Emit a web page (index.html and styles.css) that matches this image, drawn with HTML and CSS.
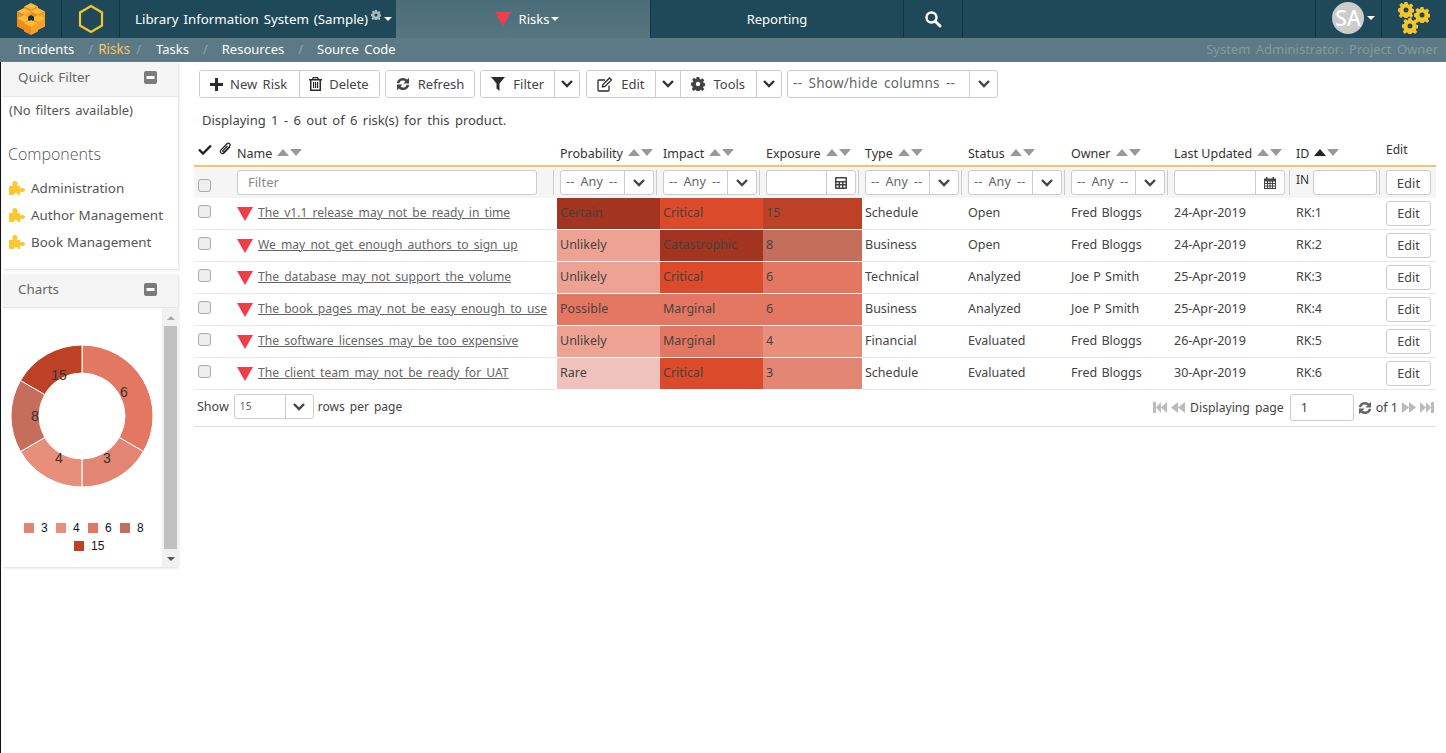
FILE: index.html
```html
<!DOCTYPE html>
<html lang="en">
<head>
<meta charset="utf-8">
<title>Risks</title>
<link rel="stylesheet" href="styles.css">
</head>
<body>
<svg class="sprite" width="0" height="0" aria-hidden="true">
  <defs>
    <symbol id="i-chev" viewBox="0 0 14 10"><path d="M2 2l5 5 5-5" fill="none" stroke="currentColor" stroke-width="2.4"/></symbol>
    <symbol id="i-tri" viewBox="0 0 16 14"><path d="M0 0h16L8 14z" fill="#ef3e4a"/></symbol>
    <symbol id="i-up" viewBox="0 0 12 7"><path d="M0 7L6 0l6 7z" fill="currentColor"/></symbol>
    <symbol id="i-down" viewBox="0 0 12 7"><path d="M0 0h12L6 7z" fill="currentColor"/></symbol>
    <symbol id="i-refresh" viewBox="0 0 14 14"><path d="M.8 6A6.300 6.300 0 0 1 11.200 2.600L13 .8V6.600H7.400L9.500 4.500A3.800 3.800 0 0 0 3.200 6.200zM13.200 8A6.300 6.300 0 0 1 2.800 11.400L1 13.200V7.400H6.600L4.500 9.500A3.800 3.800 0 0 0 10.800 7.800z" fill="currentColor"/></symbol>
    <symbol id="i-puzzle" viewBox="0 0 16 14"><path d="M0 14V5h4C3 3 3 0 6 0s3 3 2 5h3v2.500c1-.8 5-1 5 1.500s-4 2.300-5 1.500V14H8.500c.6-1 0-2-1.500-2s-2.500 1-2 2z" fill="#fdc82f"/></symbol>
    <symbol id="i-minus" viewBox="0 0 13 13"><rect width="13" height="13" rx="2" fill="#7b7b7b"/><rect x="2.500" y="5" width="8" height="3" fill="#fff"/></symbol>
    <symbol id="i-gear" viewBox="0 0 16 16"><path d="M6.500 0h3l.4 2.300 1.300.5 1.900-1.300 2.100 2.100-1.300 1.900.5 1.300 2.100.4v3l-2.100.4-.5 1.300 1.300 1.900-2.100 2.100-1.900-1.300-1.300.5-.4 2.300h-3l-.4-2.300-1.300-.5-1.900 1.300-2.100-2.100 1.300-1.900-.5-1.300L0 9.500v-3l2.100-.4.500-1.300L1.300 3 3.400 .9l1.900 1.300 .8-.5zM8 5.500a2.500 2.500 0 1 0 0 5 2.500 2.500 0 0 0 0-5z" fill="currentColor" fill-rule="evenodd"/></symbol>
    <symbol id="i-calc" viewBox="0 0 12 12"><path d="M1 0h10a1 1 0 0 1 1 1v10a1 1 0 0 1-1 1H1a1 1 0 0 1-1-1V1a1 1 0 0 1 1-1zm.5 1.500v2.500h9V1.500zm0 4v1.500h2V5.500zm3.500 0v1.500h2V5.500zm3.500 0v1.500h2V5.500zm-7 3v2h2v-2zm3.500 0v2h2v-2zm3.500 0v2h2v-2z" fill="currentColor" fill-rule="evenodd"/></symbol>
    <symbol id="i-cal" viewBox="0 0 12 12"><path d="M2 0h1.500v1.500h5V0H10v1.500h2V12H0V1.500h2zM1 4.500v1.500h2V4.500zm3 0v1.500h1.500V4.500zm2.500 0v1.500H8V4.500zm2.500 0v1.500h2V4.500zM1 7v1.500h2V7zm3 0v1.500h1.500V7zm2.500 0v1.500H8V7zM9 7v1.500h2V7zM1 9.500V11h2V9.500zm3 0V11h1.500V9.500zm2.500 0V11H8V9.500zm2.500 0V11h2V9.500z" fill="currentColor" fill-rule="evenodd"/></symbol>
    <symbol id="i-first" viewBox="0 0 14 11"><path d="M0 0h3v11H0zM3 5.500L8 0v11zM8 5.500L14 0v11z" fill="currentColor"/></symbol>
    <symbol id="i-prev" viewBox="0 0 14 11"><path d="M0 5.500L7 0v11zM7 5.500L14 0v11z" fill="currentColor"/></symbol>
    <symbol id="i-next" viewBox="0 0 14 11"><path d="M0 0l7 5.500L0 11zM7 0l7 5.500L7 11z" fill="currentColor"/></symbol>
    <symbol id="i-last" viewBox="0 0 14 11"><path d="M0 0l6 5.500L0 11zM6 0l5 5.500L6 11zM11 0h3v11h-3z" fill="currentColor"/></symbol>
    <symbol id="i-cube" viewBox="0 0 14 15"><path d="M7 0l7 3.500L7 7 0 3.500z" fill="#fdbb3d"/><path d="M0 3.500L7 7v8l-7-3.500z" fill="#f08c1b"/><path d="M14 3.500L7 7v8l7-3.500z" fill="#f9a326"/></symbol>
  </defs>
</svg>

<header class="topbar">
  <a class="cell cell-logo">
    <svg width="30" height="33" viewBox="0 0 30 33">
      <use href="#i-cube" x="8" y="1" width="14" height="15"/>
      <use href="#i-cube" x="1" y="6" width="14" height="15"/>
      <use href="#i-cube" x="15" y="6" width="14" height="15"/>
      <use href="#i-cube" x="1" y="13" width="14" height="15"/>
      <use href="#i-cube" x="15" y="13" width="14" height="15"/>
      <path d="M15 13l3 1.800v3.500L15 20l-3-1.700v-3.500z" fill="#17323e"/>
      <use href="#i-cube" x="8" y="18" width="14" height="15"/>
    </svg>
  </a>
  <a class="cell cell-hex">
    <svg width="26" height="30" viewBox="0 0 26 30"><path d="M13 2l11 6.500v13L13 28 2 21.500v-13z" fill="none" stroke="#f5c52c" stroke-width="2.200"/></svg>
  </a>
  <a class="cell cell-title">Library Information System (Sample)<svg class="title-gear" width="10" height="10"><use href="#i-gear"/></svg><span class="caret"></span></a>
  <a class="cell cell-risks"><svg class="risks-tri" width="16" height="14"><use href="#i-tri"/></svg>Risks<span class="caret"></span></a>
  <a class="cell cell-reporting">Reporting</a>
  <a class="cell cell-search">
    <svg width="18" height="18" viewBox="0 0 18 18"><circle cx="7.500" cy="7.500" r="5" fill="none" stroke="#fff" stroke-width="2.400"/><path d="M11 11l5 5" stroke="#fff" stroke-width="3" stroke-linecap="round"/></svg>
  </a>
  <div class="spacer"></div>
  <a class="cell cell-user"><span class="avatar">SA</span><span class="caret"></span></a>
  <a class="cell cell-gears">
    <svg class="gears" width="34" height="34" viewBox="0 0 34 34">
      <use href="#i-gear" x="1" y="0" width="16" height="16"/>
      <use href="#i-gear" x="17" y="5" width="16" height="16"/>
      <use href="#i-gear" x="5" y="16" width="16" height="16"/>
    </svg>
  </a>
</header>

<nav class="subbar">
  <a class="sub-link">Incidents</a><span class="sep">/</span>
  <a class="sub-link active">Risks</a><span class="sep">/</span>
  <a class="sub-link">Tasks</a><span class="sep">/</span>
  <a class="sub-link">Resources</a><span class="sep">/</span>
  <a class="sub-link">Source Code</a>
  <span class="role">System Administrator: Project Owner</span>
</nav>

<div class="page">
  <aside class="sidebar">
    <section class="panel panel-top">
      <div class="panel-head head-filter"><span>Quick Filter</span><svg width="13" height="13"><use href="#i-minus"/></svg></div>
      <p class="no-filters">(No filters available)</p>
      <h2 class="comp-title">Components</h2>
      <ul class="comp-list">
        <li><svg width="16" height="14"><use href="#i-puzzle"/></svg>Administration</li>
        <li><svg width="16" height="14"><use href="#i-puzzle"/></svg>Author Management</li>
        <li><svg width="16" height="14"><use href="#i-puzzle"/></svg>Book Management</li>
      </ul>
    </section>
    <section class="panel panel-charts">
      <div class="panel-head head-charts"><span>Charts</span><svg width="13" height="13"><use href="#i-minus"/></svg></div>
      <div class="chart-wrap">
        <div class="chart">
          <svg class="donut" width="160" height="160" viewBox="-80 -80 160 160">
            <g stroke="#fff" stroke-width="1">
              <path d="M0-71A71 71 0 0 1 61.490 35.500L37.240 21.500A43 43 0 0 0 0-43z" fill="#e47762"/>
              <path d="M61.490 35.500A71 71 0 0 1 0 71V43A43 43 0 0 0 37.240 21.500z" fill="#e28572"/>
              <path d="M0 71A71 71 0 0 1-61.490 35.500L-37.240 21.500A43 43 0 0 0 0 43z" fill="#e88f7b"/>
              <path d="M-61.490 35.500A71 71 0 0 1-61.490-35.500L-37.240-21.500A43 43 0 0 0-37.240 21.500z" fill="#c66e5c"/>
              <path d="M-61.490-35.500A71 71 0 0 1 0-71V-43A43 43 0 0 0-37.240-21.500z" fill="#bd4125"/>
            </g>
            <g class="donut-labels">
              <text x="42" y="-19">6</text>
              <text x="25" y="47">3</text>
              <text x="-23" y="47">4</text>
              <text x="-47" y="5">8</text>
              <text x="-23" y="-36">15</text>
            </g>
          </svg>
          <div class="legend">
            <span class="lg"><i class="sw s3"></i>3</span>
            <span class="lg"><i class="sw s4"></i>4</span>
            <span class="lg"><i class="sw s6"></i>6</span>
            <span class="lg"><i class="sw s8"></i>8</span>
            <span class="lg lg-wide"><i class="sw s15"></i>15</span>
          </div>
        </div>
        <div class="scrollbar">
          <span class="sb-up"></span>
          <span class="sb-thumb"></span>
          <span class="sb-down"></span>
        </div>
      </div>
    </section>
  </aside>

  <main class="main">
    <div class="toolbar">
      <div class="btn-group">
        <button class="btn btn-new"><svg width="13" height="13" viewBox="0 0 13 13"><path d="M5 0h3v5h5v3H8v5H5V8H0V5h5z" fill="#2b2b2b"/></svg>New Risk</button>
        <button class="btn btn-del"><svg width="13" height="14" viewBox="0 0 13 14"><path d="M4 0h5l1 2h3v1.500H12V14H1V3.500H0V2h3zM5 1.300L4.500 2h4L8 1.300zM2.500 3.500V12.500h8V3.500zM4 5h1.200v6H4zm2 0h1.200v6H6zm2 0h1.200v6H8z" fill="#2b2b2b" fill-rule="evenodd"/></svg>Delete</button>
      </div>
      <div class="btn-group">
        <button class="btn btn-refresh"><svg width="14" height="14"><use href="#i-refresh"/></svg>Refresh</button>
      </div>
      <div class="btn-group">
        <button class="btn btn-filter"><svg width="14" height="14" viewBox="0 0 14 14"><path d="M0 0h14L8.500 6.500V14l-3-2.500V6.500z" fill="#2b2b2b"/></svg>Filter</button>
        <button class="btn btn-caret"><svg width="14" height="10"><use href="#i-chev"/></svg></button>
      </div>
      <div class="btn-group group-edit">
        <button class="btn btn-edit"><svg width="16" height="15" viewBox="0 0 16 15"><path d="M12 8.500V13a1 1 0 0 1-1 1H2a1 1 0 0 1-1-1V4a1 1 0 0 1 1-1h6M6 7.500l6.500-6.500 2 2L8 9.500l-2.500.5z" fill="none" stroke="#2b2b2b" stroke-width="1.300"/></svg>Edit</button>
        <button class="btn btn-caret"><svg width="14" height="10"><use href="#i-chev"/></svg></button>
        <button class="btn btn-tools"><svg width="14" height="14"><use href="#i-gear"/></svg>Tools</button>
        <button class="btn btn-caret"><svg width="14" height="10"><use href="#i-chev"/></svg></button>
      </div>
      <div class="select select-cols"><span class="select-text">-- Show/hide columns --</span><span class="select-arrow"><svg width="14" height="10"><use href="#i-chev"/></svg></span></div>
    </div>

    <p class="summary">Displaying 1 - 6 out of 6 risk(s) for this product.</p>

    <table class="grid">
      <colgroup>
        <col class="c-check"><col class="c-name"><col class="c-mid"><col class="c-mid"><col class="c-exp"><col class="c-mid"><col class="c-mid"><col class="c-mid"><col class="c-date"><col class="c-id"><col class="c-edit">
      </colgroup>
      <thead>
        <tr class="head-row">
          <th class="th-tools">
            <svg width="14" height="11" viewBox="0 0 14 11"><path d="M1 5.500l4 4 8-8" fill="none" stroke="#222" stroke-width="2.400"/></svg>
            <svg class="clip" width="12" height="13" viewBox="0 0 12 13"><path d="M10.800 5L5 11c-1.800 1.800-4.800-.6-3-3l5.800-6c2-2 4.400.5 2.800 2.400L5.200 9.800c-.8.8-2-.2-1.200-1.200L8.500 4" fill="none" stroke="#222" stroke-width="1.200"/></svg>
          </th>
          <th class="th-name">Name<span class="sort"><svg width="12" height="7"><use href="#i-up"/></svg><svg width="12" height="7"><use href="#i-down"/></svg></span></th>
          <th>Probability<span class="sort"><svg width="12" height="7"><use href="#i-up"/></svg><svg width="12" height="7"><use href="#i-down"/></svg></span></th>
          <th>Impact<span class="sort"><svg width="12" height="7"><use href="#i-up"/></svg><svg width="12" height="7"><use href="#i-down"/></svg></span></th>
          <th>Exposure<span class="sort"><svg width="12" height="7"><use href="#i-up"/></svg><svg width="12" height="7"><use href="#i-down"/></svg></span></th>
          <th>Type<span class="sort"><svg width="12" height="7"><use href="#i-up"/></svg><svg width="12" height="7"><use href="#i-down"/></svg></span></th>
          <th>Status<span class="sort"><svg width="12" height="7"><use href="#i-up"/></svg><svg width="12" height="7"><use href="#i-down"/></svg></span></th>
          <th>Owner<span class="sort"><svg width="12" height="7"><use href="#i-up"/></svg><svg width="12" height="7"><use href="#i-down"/></svg></span></th>
          <th>Last Updated<span class="sort"><svg width="12" height="7"><use href="#i-up"/></svg><svg width="12" height="7"><use href="#i-down"/></svg></span></th>
          <th>ID<span class="sort"><svg class="sorted" width="12" height="7"><use href="#i-up"/></svg><svg width="12" height="7"><use href="#i-down"/></svg></span></th>
          <th class="th-edit">Edit</th>
        </tr>
        <tr class="filter-row">
          <td><span class="cb"></span></td>
          <td class="div"><span class="input input-name">Filter</span></td>
          <td class="div"><div class="select mini"><span class="select-text">-- Any --</span><span class="select-arrow"><svg width="14" height="10"><use href="#i-chev"/></svg></span></div></td>
          <td class="div"><div class="select mini"><span class="select-text">-- Any --</span><span class="select-arrow"><svg width="14" height="10"><use href="#i-chev"/></svg></span></div></td>
          <td class="div"><div class="select mini"><span class="select-text"></span><span class="select-arrow"><svg width="12" height="12"><use href="#i-calc"/></svg></span></div></td>
          <td class="div"><div class="select mini"><span class="select-text">-- Any --</span><span class="select-arrow"><svg width="14" height="10"><use href="#i-chev"/></svg></span></div></td>
          <td class="div"><div class="select mini"><span class="select-text">-- Any --</span><span class="select-arrow"><svg width="14" height="10"><use href="#i-chev"/></svg></span></div></td>
          <td class="div"><div class="select mini"><span class="select-text">-- Any --</span><span class="select-arrow"><svg width="14" height="10"><use href="#i-chev"/></svg></span></div></td>
          <td class="div td-date"><div class="select mini"><span class="select-text"></span><span class="select-arrow"><svg width="12" height="12"><use href="#i-cal"/></svg></span></div></td>
          <td class="div"><div class="id-filter"><span class="in-label">IN</span><span class="input input-id"></span></div></td>
          <td class="div"><button class="edit-btn">Edit</button></td>
        </tr>
      </thead>
      <tbody>
        <tr><td><span class="cb"></span></td><td><svg class="row-tri" width="16" height="14"><use href="#i-tri"/></svg><a class="risk-link">The v1.1 release may not be ready in time</a></td><td class="heat h-certain">Certain</td><td class="heat h-crit">Critical</td><td class="heat h-15">15</td><td>Schedule</td><td>Open</td><td>Fred Bloggs</td><td>24-Apr-2019</td><td>RK:1</td><td class="td-edit"><button class="edit-btn">Edit</button></td></tr>
        <tr><td><span class="cb"></span></td><td><svg class="row-tri" width="16" height="14"><use href="#i-tri"/></svg><a class="risk-link">We may not get enough authors to sign up</a></td><td class="heat h-unlikely">Unlikely</td><td class="heat h-cat">Catastrophic</td><td class="heat h-8">8</td><td>Business</td><td>Open</td><td>Fred Bloggs</td><td>24-Apr-2019</td><td>RK:2</td><td class="td-edit"><button class="edit-btn">Edit</button></td></tr>
        <tr><td><span class="cb"></span></td><td><svg class="row-tri" width="16" height="14"><use href="#i-tri"/></svg><a class="risk-link">The database may not support the volume</a></td><td class="heat h-unlikely">Unlikely</td><td class="heat h-crit">Critical</td><td class="heat h-6">6</td><td>Technical</td><td>Analyzed</td><td>Joe P Smith</td><td>25-Apr-2019</td><td>RK:3</td><td class="td-edit"><button class="edit-btn">Edit</button></td></tr>
        <tr><td><span class="cb"></span></td><td><svg class="row-tri" width="16" height="14"><use href="#i-tri"/></svg><a class="risk-link">The book pages may not be easy enough to use</a></td><td class="heat h-6">Possible</td><td class="heat h-6">Marginal</td><td class="heat h-6">6</td><td>Business</td><td>Analyzed</td><td>Joe P Smith</td><td>25-Apr-2019</td><td>RK:4</td><td class="td-edit"><button class="edit-btn">Edit</button></td></tr>
        <tr><td><span class="cb"></span></td><td><svg class="row-tri" width="16" height="14"><use href="#i-tri"/></svg><a class="risk-link">The software licenses may be too expensive</a></td><td class="heat h-unlikely">Unlikely</td><td class="heat h-6">Marginal</td><td class="heat h-4">4</td><td>Financial</td><td>Evaluated</td><td>Fred Bloggs</td><td>26-Apr-2019</td><td>RK:5</td><td class="td-edit"><button class="edit-btn">Edit</button></td></tr>
        <tr><td><span class="cb"></span></td><td><svg class="row-tri" width="16" height="14"><use href="#i-tri"/></svg><a class="risk-link">The client team may not be ready for UAT</a></td><td class="heat h-rare">Rare</td><td class="heat h-crit">Critical</td><td class="heat h-3">3</td><td>Schedule</td><td>Evaluated</td><td>Fred Bloggs</td><td>30-Apr-2019</td><td>RK:6</td><td class="td-edit"><button class="edit-btn">Edit</button></td></tr>
      </tbody>
    </table>

    <div class="pager">
      <div class="pager-left">
        <span>Show</span>
        <div class="select rows-select"><span class="select-text">15</span><span class="select-arrow"><svg width="14" height="10"><use href="#i-chev"/></svg></span></div>
        <span class="rows-label">rows per page</span>
      </div>
      <div class="pager-right">
        <svg class="pg" width="14" height="11"><use href="#i-first"/></svg>
        <svg class="pg" width="14" height="11"><use href="#i-prev"/></svg>
        <span class="pg-text">Displaying page</span>
        <span class="input input-page">1</span>
        <svg class="pg-refresh" width="14" height="14"><use href="#i-refresh"/></svg>
        <span class="pg-of">of 1</span>
        <svg class="pg" width="14" height="11"><use href="#i-next"/></svg>
        <svg class="pg" width="14" height="11"><use href="#i-last"/></svg>
      </div>
    </div>
  </main>
</div>
</body>
</html>
```
FILE: styles.css
```css
* { box-sizing: border-box; }
html, body { margin: 0; padding: 0; height: 100%; background: #fff; overflow: hidden; }
body { font-family: "Noto Sans", "Open Sans", sans-serif; font-size: 13px; color: #333; word-spacing: 2px; }
svg { display: inline-block; flex: none; }
.sprite { position: absolute; }

.topbar { display: flex; height: 38px; background: #1f4959; color: #fff; font-size: 13px; }
.cell { display: flex; align-items: center; justify-content: center; height: 38px; border-right: 1px solid #143644; white-space: nowrap; }
.cell-logo { width: 62px; padding-bottom: 2px; }
.cell-hex { width: 58px; }
.cell-title { width: 276px; border-right: 0; justify-content: flex-start; padding-left: 15px; font-size: 13.300px; word-spacing: 1.500px; }
.title-gear { color: #a9b8be; margin: 0 1px 8px 3px; }
.caret { display: inline-block; margin-left: 2px; border: 4px solid transparent; border-top-color: #fff; border-bottom-width: 0; }
.cell-risks { width: 255px; background: linear-gradient(#4a6d79, #567680); padding-left: 8px; }
.risks-tri { margin-right: 8px; }
.cell-reporting { width: 253px; }
.cell-search { width: 59px; }
.spacer { flex: 1; border-right: 1px solid #143644; }
.cell-user { width: 66px; padding: 0 0 3px 10px; }
.avatar { width: 32px; height: 32px; border-radius: 50%; background: #ccc; color: #fff; font-size: 21px; font-weight: 500; display: flex; align-items: center; justify-content: center; margin-right: 1px; word-spacing: 0; }
.cell-gears { width: 64px; border-right: 0; }
.gears { color: #f5c52c; }

.subbar { display: flex; align-items: center; height: 24px; background: #5c7a85; color: #fff; padding: 0 0 2px 18px; }
.sub-link { color: #fff; }
.sub-link.active { color: #f5c664; font-size: 13.500px; }
.sep { color: #8fa5ad; }
.subbar .sep { margin: 0 14px; }
.subbar .sep:first-of-type { margin: 0 5px 0 14px; }
.subbar .active + .sep { margin: 0 15px 0 6px; }
.role { margin-left: auto; padding-right: 8px; color: #84999f; }

.page { display: flex; height: 691px; border-left: 1px solid #111; }
.sidebar { width: 177px; flex: none; padding-left: 1px; display: flex; flex-direction: column; gap: 5px; }
.panel { background: #fff; box-shadow: 1px 1px 2px #ddd; }
.panel-top { height: 207px; }
.panel-head { display: flex; justify-content: space-between; align-items: center; height: 35px; padding: 0 21px 3px 16px; background: #f5f5f5; border-bottom: 1px solid #e6e6e6; color: #666; font-size: 13.400px; word-spacing: 1px; }
.head-filter { padding-bottom: 4px; }
.head-charts { height: 34px; }
.no-filters { margin: 4px 0 0 7px; color: #555; word-spacing: 1.500px; }
.comp-title { margin: 24px 0 0 6px; font-family: "Open Sans", sans-serif; font-size: 16px; line-height: 23px; font-weight: 300; color: #555; word-spacing: 0; }
.comp-list { list-style: none; margin: 8px 0 0; padding: 0 0 0 7px; color: #555; font-size: 13.400px; word-spacing: .5px; }
.comp-list li { display: flex; align-items: center; height: 27px; gap: 6px; }

.panel-charts { height: 293px; }
.chart-wrap { display: flex; height: 259px; }
.chart { flex: 1; display: flex; flex-direction: column; align-items: center; padding-top: 28px; }
.donut-labels { font-family: "Liberation Sans", sans-serif; font-size: 14px; fill: #333; text-anchor: middle; }
.legend { display: flex; flex-wrap: wrap; justify-content: center; width: 128px; margin: 23px 0 0 12px; font-family: "Liberation Sans", sans-serif; font-size: 12px; color: #111; line-height: 18px; }
.lg { display: inline-flex; align-items: center; gap: 7px; min-width: 32px; }
.lg-wide { margin-left: 4px; }
.sw { display: inline-block; width: 10px; height: 10px; }
.s3 { background: #e28572; }
.s4 { background: #e88f7b; }
.s6 { background: #e47762; }
.s8 { background: #c66e5c; }
.s15 { background: #bd4125; }
.scrollbar { width: 17px; background: #f1f1f1; display: flex; flex-direction: column; align-items: center; padding: 0 2px; }
.sb-up, .sb-down { height: 0; flex: none; width: 0; border: 4px solid transparent; }
.sb-up { border-bottom: 4px solid #aaa; border-top: 0; margin: 8px 0 6px; }
.sb-down { border-top: 4px solid #555; border-bottom: 0; margin: 8px 0 6px; }
.sb-thumb { flex: 1; width: 13px; background: #c1c1c1; }

.main { flex: 1; min-width: 0; padding: 8px 10px 0 16px; }
.toolbar { display: flex; gap: 5px; height: 28px; margin-left: 5px; }
.btn-group { display: flex; border: 1px solid #ccc; border-radius: 3px; overflow: hidden; background: #fff; }
.group-edit { margin-left: 1px; }
.btn { display: flex; align-items: center; gap: 8px; height: 26px; padding: 0 10px; border: 0; border-right: 1px solid #ccc; background: #fff; color: #444; font: inherit; word-spacing: inherit; }
.btn:last-child { border-right: 0; }
.btn-new { gap: 7px; padding-right: 12px; }
.btn-del { padding-left: 9px; gap: 7px; }
.btn-edit { padding-right: 11px; }
.btn-tools { padding-right: 11px; }
.btn-caret { padding: 0 5px; color: #333; }
.select { display: flex; align-items: stretch; height: 28px; border: 1px solid #ccc; border-radius: 3px; background: #fff; }
.select-text { flex: 1; min-width: 0; padding-left: 5px; line-height: 25px; color: #666; white-space: nowrap; overflow: hidden; font-size: 13.500px; word-spacing: 2.500px; letter-spacing: .25px; }
.select-arrow { display: flex; align-items: center; justify-content: center; width: 28px; border-left: 1px solid #ccc; color: #444; }
.select-cols { width: 211px; }
.summary { margin: 13px 0 0 8px; line-height: 18px; color: #444; }

.grid { table-layout: fixed; width: 1242px; border-collapse: separate; border-spacing: 0; margin-top: 9px; }
.c-check { width: 39px; }
.c-name { width: 324px; }
.c-mid { width: 103px; }
.c-exp { width: 99px; }
.c-date { width: 122px; }
.c-id { width: 90px; }
.c-edit { width: 53px; }
.head-row { height: 29px; }
.head-row th { text-align: left; font-weight: 400; font-size: 12.500px; color: #333; padding: 3px 0 0 3px; white-space: nowrap; word-spacing: 0; overflow: visible; border-bottom: 2px solid #f5c664; }
.head-row .th-name { padding-left: 4px; }
.head-row .th-tools { padding: 4px 0 0 4px; vertical-align: top; }
.clip { margin-left: 4px; }
.head-row .th-edit { padding-top: 3px; vertical-align: top; font-size: 12px; }
.sort { display: inline-flex; gap: 1px; margin-left: 5px; color: #999; vertical-align: 2px; }
.sorted { color: #222; }
.filter-row { height: 31px; background: #f5f5f5; }
.filter-row td { padding: 0 6px 0 3px; position: relative; }
.filter-row .td-date { padding-right: 8px; }
.div::before { content: ""; position: absolute; left: -4px; top: 3px; bottom: 3px; width: 1px; background: #ccc; }
.div:nth-child(2)::before { display: none; }
.cb { display: block; width: 13px; height: 13px; margin: 0 0 2px 1px; border: 1px solid #aaa; border-radius: 3px; background: #eee; }
.filter-row .cb { margin: 5px 0 0 1px; }
.input { display: block; height: 25px; border: 1px solid #ccc; border-radius: 3px; background: #fff; line-height: 23px; color: #888; }
.input-name { width: 300px; padding-left: 10px; margin-left: 1px; }
.mini { height: 25px; }
.mini .select-text { line-height: 22px; font-size: 12.500px; word-spacing: 2.500px; letter-spacing: .2px; }
.mini .select-arrow { width: 29px; }
.id-filter { display: flex; gap: 4px; }
.in-label { font-size: 12px; line-height: 20px; word-spacing: 0; }
.input-id { width: 64px; }
.edit-btn { display: block; width: 45px; height: 25px; padding: 0; border: 1px solid #ccc; border-radius: 3px; background: #fff; color: #444; font: inherit; }

tbody tr { height: 32px; }
tbody td { padding: 0 3px 2px; white-space: nowrap; color: #444; font-size: 12.500px; border-bottom: 1px solid #e8e8e8; word-spacing: 1px; }
tbody td.heat { border-bottom-color: #fff; }
tbody td.td-edit { padding-bottom: 0; }
.row-tri { vertical-align: -4px; margin: 0 5px 0 1px; }
.risk-link { color: #666; text-decoration: underline; font-size: 12.100px; word-spacing: 2px; }
.h-certain { background: #a33520; }
.h-crit { background: #db4a2b; }
.h-15 { background: #bd4125; }
.h-unlikely { background: #eda294; }
.h-cat { background: #a33520; }
.h-8 { background: #c66e5c; }
.h-6 { background: #e47762; }
.h-4 { background: #e88f7b; }
.h-3 { background: #e28572; }
.h-rare { background: #efc3bb; }

.pager { display: flex; justify-content: space-between; align-items: flex-start; height: 37px; border-bottom: 1px solid #ddd; padding: 4px 2px 0 3px; font-size: 12.500px; color: #444; }
.pager-left, .pager-right { display: flex; align-items: center; gap: 4px; }
.pager-left { gap: 5px; }
.rows-select { width: 80px; height: 25px; }
.rows-select .select-text { line-height: 22px; font-size: 10px; }
.rows-label { font-size: 12px; margin-left: -1px; }
.pg { color: #bbb; }
.pg-text { font-size: 12.200px; margin-left: 1px; }
.input-page { width: 64px; height: 27px; line-height: 25px; padding-left: 10px; color: #444; margin-left: 2px; }
.pg-refresh { color: #666; }
.pg-of { word-spacing: 0; }
```
